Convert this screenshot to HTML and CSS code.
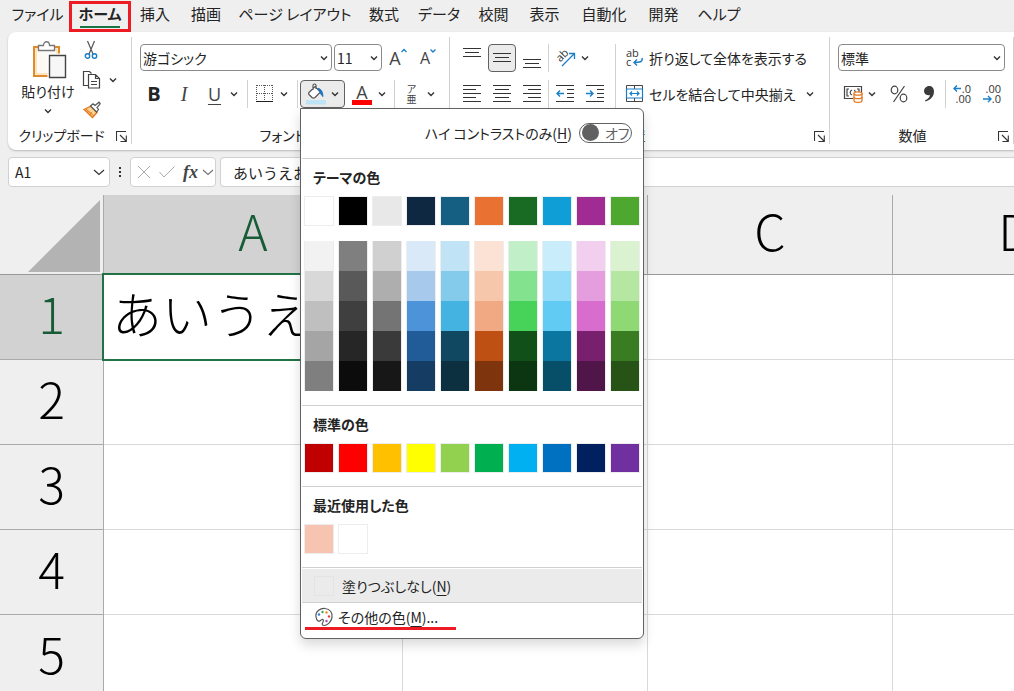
FILE: index.html
```html
<!DOCTYPE html>
<html lang="ja">
<head>
<meta charset="utf-8">
<title>Excel</title>
<link rel="stylesheet" href="styles.css">
<script src="app.js" defer></script>
</head>
<body>
<svg class="defs" aria-hidden="true">
  <symbol id="chev" viewBox="0 0 8 8"><path d="M1 2.5 4 5.5 7 2.5" fill="none" stroke="currentColor" stroke-width="1.4"/></symbol>
  <symbol id="chev-big" viewBox="0 0 12 12"><path d="M1 4l5 4.500L11 4" fill="none" stroke="currentColor" stroke-width="1.200"/></symbol>
  <symbol id="launch" viewBox="0 0 11 11"><path d="M.5 10V.5H10M4 4l6 6M10.3 4.5v6H4.5" fill="none" stroke="#333" stroke-width="1.1"/></symbol>
</svg>

<nav class="tabs">
  <button class="tab">ファイル</button>
  <button class="tab tab-active">ホーム</button>
  <button class="tab">挿入</button>
  <button class="tab">描画</button>
  <button class="tab">ページ レイアウト</button>
  <button class="tab">数式</button>
  <button class="tab">データ</button>
  <button class="tab">校閲</button>
  <button class="tab">表示</button>
  <button class="tab">自動化</button>
  <button class="tab">開発</button>
  <button class="tab">ヘルプ</button>
</nav>

<main>
<section class="ribbon">
  <div class="group group-clip">
    <div class="clip-body">
      <button class="paste">
        <svg width="40" height="40" viewBox="-4 -1 40 40"><path d="M2 6h25v29H2z" fill="#fff" stroke="#e08a2c" stroke-width="2"/><path d="M4 8h21v25H4z" fill="#fdfaf4" stroke="#fbdcae" stroke-width="1.500"/><path d="M6.500 9.500v-5h5c0-5 6-5 6 0h5v5z" fill="#fff" stroke="#777" stroke-width="1.300"/><path d="M15.500 12.500h19v25h-19z" fill="#fff"/><path d="M17.500 14.500h16v22h-16z" fill="#f7f7f7" stroke="#444" stroke-width="1.400"/></svg>
        <span>貼り付け</span>
        <svg class="chev" width="8" height="8"><use href="#chev"/></svg>
      </button>
      <div class="clip-tools">
        <button class="tool" aria-label="切り取り"><svg width="18" height="20" viewBox="-2 0 18 20"><path d="M3.500 1l5.500 13M10.500 1 5 14" fill="none" stroke="#555" stroke-width="1.200"/><circle cx="3.500" cy="16" r="2.200" fill="none" stroke="#1a7fc8" stroke-width="1.400"/><circle cx="10.500" cy="16" r="2.200" fill="none" stroke="#1a7fc8" stroke-width="1.400"/></svg></button>
        <button class="tool" aria-label="コピー"><svg width="20" height="20" viewBox="0 0 20 20"><path d="M6.500 15.500h-5V1.500h6l2 2" fill="none" stroke="#444" stroke-width="1.200"/><path d="M6.500 4.500h7l4 4v9.500h-11zM13.500 4.500v4h4M9 11.500h6M9 14.500h6" fill="#fff" stroke="#444" stroke-width="1.200"/></svg><svg class="chev" width="8" height="8"><use href="#chev"/></svg></button>
        <button class="tool" aria-label="書式のコピー"><svg width="20" height="18" viewBox="0 0 20 18"><path d="M2 8.500 9 5l6 6.500-4.500 5z" fill="#fbd28e" stroke="#e3771f" stroke-width="1.300"/><path d="M5 9.500l2 2M4 8l8 7M8 14l1.500-3" stroke="#e3771f" fill="none"/><path d="M8.500 5 11 2.800l2 1.700L17 1.200l1.200 1.600L15 6.500l1.500 2L14.500 11z" fill="#fff" stroke="#555" stroke-width="1.200"/></svg></button>
      </div>
    </div>
    <footer class="group-foot"><span>クリップボード</span><button class="launch" aria-label="クリップボードの設定"><svg width="11" height="11"><use href="#launch"/></svg></button></footer>
  </div>

  <div class="group group-font">
    <div class="row row-fields">
      <label class="field field-font"><select aria-label="フォント"><option>游ゴシック</option></select><svg class="chev" width="8" height="8"><use href="#chev"/></svg></label>
      <label class="field field-size"><select aria-label="サイズ"><option>11</option></select><svg class="chev" width="8" height="8"><use href="#chev"/></svg></label>
      <button class="icon grow" aria-label="フォント サイズの拡大"><span>A</span><svg width="6" height="16" viewBox="0 0 6 16"><path d="M.5 4 3 1.500 5.500 4" fill="none" stroke="#1a7fc8" stroke-width="1.300"/></svg></button>
      <button class="icon shrink" aria-label="フォント サイズの縮小"><span>A</span><svg width="6" height="16" viewBox="0 0 6 16"><path d="M.5 1.500 3 4 5.500 1.500" fill="none" stroke="#1a7fc8" stroke-width="1.300"/></svg></button>
    </div>
    <div class="row">
      <button class="icon glyph-b">B</button>
      <button class="icon glyph-i">I</button>
      <button class="split glyph-u"><span class="pic">U</span><svg class="chev" width="8" height="8"><use href="#chev"/></svg></button>
      <i class="sep"></i>
      <button class="split" aria-label="罫線"><span class="pic"><svg width="18" height="18" viewBox="0 0 18 18"><path d="M1 .5h16M1 8.500h16" stroke="#555" stroke-dasharray="1 1"/><path d="M.5 0v16M8.500 0v16M16.500 0v16" stroke="#555" stroke-dasharray="1 1"/><path d="M0 16.500h17" stroke="#222"/></svg></span><svg class="chev" width="8" height="8"><use href="#chev"/></svg></button>
      <i class="sep"></i>
      <button class="split split-on" aria-label="塗りつぶしの色"><span class="pic"><svg width="20" height="22" viewBox="0 0 20 22"><path d="M3 9.500 9 3.500l5.500 5.500-5.500 5.500c-1 .8-2 .8-3 0L3 11.500c-.6-.7-.6-1.300 0-2zM7 7V2.500c0-2 3-2 3 0V6" fill="#fff" stroke="#555" stroke-width="1.200"/><path d="M12 5.500c3 .2 4.500 3 5 8-2.500-1.500-2.500-4.500-5-8z" fill="#1a72c0" stroke="#1a72c0"/><path d="M0 17h20v4.500H0z" fill="#bfe4f5"/></svg></span><svg class="chev" width="8" height="8"><use href="#chev"/></svg></button>
      <button class="split" aria-label="フォントの色"><span class="pic font-color">A</span><svg class="chev" width="8" height="8"><use href="#chev"/></svg></button>
      <i class="sep"></i>
      <button class="split"><span class="pic ruby"><span>ア</span><span>亜</span></span><svg class="chev" width="8" height="8"><use href="#chev"/></svg></button>
    </div>
    <footer class="group-foot"><span>フォント</span></footer>
  </div>

  <div class="group group-align">
    <div class="align-body">
      <div class="align-left">
        <div class="row">
          <button class="icon" aria-label="上揃え"><svg width="18" height="20" viewBox="0 0 18 20"><path d="M0 .5h18M2 4.500h14M0 8.500h18" stroke="#333"/></svg></button>
          <button class="icon icon-on" aria-label="上下中央揃え"><svg width="18" height="20" viewBox="0 0 18 20"><path d="M0 5.500h18M2 9.500h14M0 13.500h18" stroke="#333"/></svg></button>
          <button class="icon" aria-label="下揃え"><svg width="18" height="20" viewBox="0 0 18 20"><path d="M0 11.500h18M2 15.500h14M0 19.500h18" stroke="#333"/></svg></button>
          <i class="sep"></i>
          <button class="split" aria-label="方向"><span class="pic"><svg width="20" height="20" viewBox="0 0 20 20"><text x="2" y="13" class="tiny" transform="rotate(-45 5 11)">ab</text><path d="M6 18 18 6M13 5.500h5.500V11" fill="none" stroke="#1a7fc8" stroke-width="1.300"/></svg></span><svg class="chev" width="8" height="8"><use href="#chev"/></svg></button>
        </div>
        <div class="row">
          <button class="icon" aria-label="左揃え"><svg width="18" height="18" viewBox="0 0 18 18"><path d="M0 .5h18M0 4.500h13M0 8.500h18M0 12.500h13M0 16.500h18" stroke="#333"/></svg></button>
          <button class="icon" aria-label="中央揃え"><svg width="18" height="18" viewBox="0 0 18 18"><path d="M0 .5h18M2 4.500h14M0 8.500h18M2 12.500h14M0 16.500h18" stroke="#333"/></svg></button>
          <button class="icon" aria-label="右揃え"><svg width="18" height="18" viewBox="0 0 18 18"><path d="M0 .5h18M5 4.500h13M0 8.500h18M5 12.500h13M0 16.500h18" stroke="#333"/></svg></button>
          <i class="sep"></i>
          <button class="icon" aria-label="インデントを減らす"><svg width="18" height="18" viewBox="0 0 18 18"><path d="M0 .5h18M11 4.500h7M11 8.500h7M11 12.500h7M0 16.500h18" stroke="#333"/><path d="M8 8.500H1M4 5.500l-3 3 3 3" fill="none" stroke="#1a7fc8" stroke-width="1.400"/></svg></button>
          <button class="icon" aria-label="インデントを増やす"><svg width="18" height="18" viewBox="0 0 18 18"><path d="M0 .5h18M11 4.500h7M11 8.500h7M11 12.500h7M0 16.500h18" stroke="#333"/><path d="M0 8.500h7M4 5.500l3 3-3 3" fill="none" stroke="#1a7fc8" stroke-width="1.400"/></svg></button>
        </div>
      </div>
      <i class="sep sep-tall"></i>
      <div class="align-right">
        <button class="wide"><svg width="18" height="20" viewBox="0 0 18 20"><text x="0" y="9" class="tiny">ab</text><text x="0" y="18" class="tiny">c</text><path d="M16 10c1 4-2 4.500-8 4.500M11 11.500l-3 3 3 3" fill="none" stroke="#1a7fc8" stroke-width="1.400"/></svg><span>折り返して全体を表示する</span></button>
        <button class="wide"><svg width="18" height="18" viewBox="0 0 18 18"><path d="M.5 4V.5h16V4M8.500.5V4M.5 13v3.500h16V13M8.500 13v3.500" fill="none" stroke="#444"/><path d="M.500 4h16v9H.5zM4 8.500h9M6 6.500l-2 2 2 2M11 6.500l2 2-2 2" fill="none" stroke="#1a7fc8" stroke-width="1.200"/></svg><span>セルを結合して中央揃え</span><svg class="chev" width="8" height="8"><use href="#chev"/></svg></button>
      </div>
    </div>
    <footer class="group-foot"><span>配置</span><button class="launch" aria-label="配置の設定"><svg width="11" height="11"><use href="#launch"/></svg></button></footer>
  </div>

  <div class="group group-num">
    <div class="row row-fields">
      <label class="field field-num"><select aria-label="表示形式"><option>標準</option></select><svg class="chev" width="8" height="8"><use href="#chev"/></svg></label>
    </div>
    <div class="row">
      <button class="split" aria-label="通貨表示形式"><span class="pic"><svg width="20" height="18" viewBox="0 0 20 18"><path d="M10 13.500H1.500v-12h17V8" fill="none" stroke="#444" stroke-width="1.200"/><path d="M6 4H4v7h2M14 4h2v3M9 5c-2.500 1-2.500 4 0 5M11 5c1.500.5 1.500 2 1.500 3" fill="none" stroke="#444" stroke-width="1.200"/><path d="M11 8.500v7c0 2.500 8 2.500 8 0v-7" fill="#fff" stroke="#e3771f" stroke-width="1.300"/><ellipse cx="15" cy="8.500" rx="4" ry="1.700" fill="#fff" stroke="#e3771f" stroke-width="1.300"/><path d="M11 12c0 2.200 8 2.200 8 0" fill="none" stroke="#e3771f" stroke-width="1.300"/></svg></span><svg class="chev" width="8" height="8"><use href="#chev"/></svg></button>
      <button class="icon" aria-label="パーセント"><svg width="18" height="18" viewBox="0 0 18 18"><path d="M14.500 1 3.500 17" stroke="#444" stroke-width="1.200"/><ellipse cx="4.500" cy="5" rx="3.300" ry="3.800" fill="none" stroke="#444" stroke-width="1.200"/><ellipse cx="13.500" cy="13" rx="3.300" ry="3.800" fill="none" stroke="#444" stroke-width="1.200"/></svg></button>
      <button class="icon" aria-label="桁区切り"><svg width="12" height="18" viewBox="0 0 12 18"><path d="M6 1c3 0 5 2 5 5.500 0 5-3.500 8.500-8.500 10l-.5-1c3-1.500 4.800-3.200 5-5.500-4 1-6-1.500-6-4S3.500 1 6 1z" fill="#3b3b3b"/></svg></button>
      <i class="sep"></i>
      <button class="icon" aria-label="小数点以下の表示桁数を増やす"><svg width="20" height="20" viewBox="0 0 20 20"><path d="M9 4.500H2M5 1.500l-3 3 3 3" fill="none" stroke="#1a7fc8" stroke-width="1.400"/><text x="19" y="9" class="dec">.0</text><text x="19" y="19" class="dec">.00</text></svg></button>
      <button class="icon" aria-label="小数点以下の表示桁数を減らす"><svg width="20" height="20" viewBox="0 0 20 20"><path d="M1 15h8M6 12l3 3-3 3" fill="none" stroke="#1a7fc8" stroke-width="1.400"/><text x="19" y="9" class="dec">.00</text><text x="19" y="19" class="dec">.0</text></svg></button>
    </div>
    <footer class="group-foot"><span>数値</span><button class="launch" aria-label="数値の設定"><svg width="11" height="11"><use href="#launch"/></svg></button></footer>
  </div>
</section>

<section class="formula-bar">
  <label class="name-box"><input value="A1" aria-label="名前ボックス"><svg class="chev" width="12" height="12"><use href="#chev-big"/></svg></label>
  <svg class="dots" width="3" height="11" viewBox="0 0 3 11"><path d="M0 0h2v2H0zM0 4h2v2H0zM0 8h2v2H0z" fill="#333"/></svg>
  <div class="fx-box">
    <svg width="14" height="14" viewBox="0 0 14 14"><path d="M1 1l12 12M13 1 1 13" stroke="#aaa"/></svg>
    <svg width="16" height="12" viewBox="0 0 16 12"><path d="M.5 6 5 11 15.500.5" fill="none" stroke="#aaa"/></svg>
    <span class="fx">fx</span>
    <svg class="chev" width="12" height="12"><use href="#chev-big"/></svg>
  </div>
  <input class="formula" value="あいうえお" aria-label="数式バー">
</section>

<div class="sheet">
  <table>
    <colgroup><col class="col-head"><col class="col-a"><col><col><col></colgroup>
    <thead><tr><th class="corner"><svg width="72" height="72" viewBox="0 0 72 72"><path d="M72 0v72H0z" fill="#b3b3b3"/></svg></th><th class="on">A</th><th>B</th><th>C</th><th>D</th></tr></thead>
    <tbody>
      <tr><th class="on">1</th><td class="selected">あいうえお</td><td></td><td></td><td></td></tr>
      <tr><th>2</th><td></td><td></td><td></td><td></td></tr>
      <tr><th>3</th><td></td><td></td><td></td><td></td></tr>
      <tr><th>4</th><td></td><td></td><td></td><td></td></tr>
      <tr><th>5</th><td></td><td></td><td></td><td></td></tr>
    </tbody>
  </table>
</div>
</main>

<div class="menu">
  <div class="contrast"><label for="hc">ハイ コントラストのみ(<u>H</u>)</label><span class="toggle"><input type="checkbox" id="hc"><span>オフ</span></span></div>
  <section class="block block-theme">
    <h2>テーマの色</h2>
    <div class="swatches" data-set="theme"></div>
    <div class="swatches shades" data-set="shades"></div>
  </section>
  <section class="block">
    <h2>標準の色</h2>
    <div class="swatches" data-set="standard"></div>
  </section>
  <section class="block">
    <h2>最近使用した色</h2>
    <div class="swatches" data-set="recent"></div>
  </section>
  <button class="item item-none"><span class="none-box"></span><span>塗りつぶしなし(<u>N</u>)</span></button>
  <button class="item item-more"><svg width="20" height="20" viewBox="0 0 20 20"><path d="M2 10C1 4 7 1 11 1.500c5 .5 8 4.500 7 9-1 5-5 8-8 8-2.500 0-2-2-1-3.500.8-1.500.3-3-1-2.500-1.500.5-2.500 2.500-4 1.500-1.200-.8-1.800-2.500-2-4z" fill="#fff" stroke="#555" stroke-width="1.200"/><circle cx="5" cy="7.500" r="1.200" fill="#2a7fd4"/><circle cx="8.500" cy="5" r="1.200" fill="#39a852"/><circle cx="12.500" cy="5.500" r="1.200" fill="#f08a24"/><circle cx="15" cy="9.500" r="1.200" fill="#e5443b"/><circle cx="12.500" cy="14" r="1.200" fill="#9b4fc0"/></svg><span>その他の色(<u>M</u>)...</span></button>
</div>
</body>
</html>
```
FILE: styles.css
```css
* { box-sizing: border-box; }
body {
  margin: 0;
  position: relative;
  min-height: 100vh;
  overflow: hidden;
  background: #efefef;
  color: #242424;
  font: 14px/20px "Noto Sans CJK JP", sans-serif;
  font-feature-settings: "palt";
}
.defs { position: absolute; width: 0; height: 0; }
button, input, select { font: inherit; font-feature-settings: inherit; color: inherit; border: 0; background: none; padding: 0; margin: 0; }
button { display: flex; align-items: center; justify-content: center; white-space: nowrap; }
svg { display: block; flex: none; overflow: visible; }

.tabs {
  display: grid;
  grid-template-columns: 65px 60px 50px 52px 126px 52px 58px 51px 51px 68px 51px 60px;
  padding-left: 5px;
  height: 32px;
}
.tab { position: relative; height: 28px; font-size: 15px; }
.tab-active { font-weight: 700; }
.tab-active::before { content: ""; position: absolute; inset: 1px -1px -4px; border: 3px solid #ed1c24; z-index: 2; }
.tab-active::after { content: ""; position: absolute; left: 10px; right: 10px; bottom: 0; height: 2px; background: #1a7344; }

.ribbon {
  display: flex;
  height: 118px;
  margin-left: 8px;
  padding: 5px 0 6px;
  background: #fff;
  border-radius: 8px 0 0 8px;
  box-shadow: 0 1px 2px #b8b8b8;
}
.group { display: flex; flex-direction: column; border-right: 1px solid #d1d1d1; padding-top: 7px; flex: none; }
.group-clip { width: 124px; }
.group-font { width: 318px; padding-left: 8px; }
.group-align { width: 380px; padding-left: 8px; }
.group-num { flex: 1; padding-left: 8px; }
.group-foot { position: relative; display: flex; justify-content: center; margin-top: auto; height: 18px; line-height: 18px; margin-right: 16px; }
.launch { position: absolute; right: -12px; top: 5px; }
.group-font .group-foot { margin-right: 24px; }
.group-align .group-foot { margin-right: 24px; }
.group-num .group-foot { margin-right: 26px; }
.group-align .launch { right: -20px; }
.group-num .launch { right: -22px; }

.clip-body { display: flex; gap: 8px; padding-left: 14px; margin-top: -4px; }
.paste { flex-direction: column; width: 52px; gap: 1px; justify-content: flex-start; }
.paste .chev { margin-top: 5px; }
.clip-tools { display: flex; flex-direction: column; gap: 10px; }
.tool { height: 20px; justify-content: flex-start; gap: 7px; }
.chev { color: #333; }

.row { display: flex; gap: 2px; height: 28px; align-items: center; }
.row + .row { margin-top: 8px; }
.row-fields { align-items: flex-start; }
.field { position: relative; display: block; height: 27px; }
.field select { appearance: none; width: 100%; height: 100%; border: 1px solid #8a8a8a; border-radius: 4px; padding: 0 2px; background: #fff; }
.field .chev { position: absolute; right: 4px; top: 10px; pointer-events: none; }
.field-font { width: 192px; }
.field-size { width: 48px; }
.field-num { flex: 1; margin-right: 8px; }
.icon { width: 28px; height: 28px; }
.split { width: 45px; height: 28px; justify-content: flex-start; border-radius: 4px; }
.pic { width: 29px; display: flex; justify-content: center; }
.split .chev { margin-left: 1px; }
.icon-on, .split-on { background: #ebebeb; border: 1px solid #616161; border-radius: 4px; }
.sep { width: 1px; height: 28px; background: #d1d1d1; }
.sep-tall { height: 64px; margin: 0 10px 0 4px; }
.grow span, .shrink span { font: 18px/20px "Open Sans", sans-serif; color: #444; }
.shrink span { font-size: 16px; }
.grow, .shrink { align-items: flex-start; padding-top: 4px; }
.glyph-b { font: 700 20px/20px "Open Sans", sans-serif; }
.glyph-i { font: italic 20px/20px "Liberation Serif", serif; color: #444; }
.glyph-u { font: 18px/20px "Open Sans", sans-serif; color: #444; }
.glyph-u .pic { text-decoration: underline; text-underline-offset: 3px; }
.pic.font-color { width: 20px; margin: 0 5px; height: 22px; border-bottom: 5px solid #f00; font: 18px/18px "Open Sans", sans-serif; color: #444; }
.ruby { flex-direction: column; align-items: center; font-size: 10px; line-height: 10px; color: #444; }
.tiny { font: 11px "Open Sans", sans-serif; fill: #333; }
.dec { font: 11px "Open Sans", sans-serif; fill: #333; text-anchor: end; }
.align-body { display: flex; }
.align-left { width: 153px; }
.align-right { display: flex; flex-direction: column; gap: 8px; }
.wide { height: 28px; justify-content: flex-start; gap: 5px; }
.wide .chev { margin-left: 6px; }

.formula-bar { display: flex; align-items: center; height: 30px; margin: 7px 0 8px 8px; }
.name-box, .fx-box, .formula { height: 30px; background: #fff; border: 1px solid #d1d1d1; border-radius: 4px; }
.name-box { display: flex; align-items: center; width: 102px; padding: 0 4px 0 6px; }
.name-box input { flex: 1; min-width: 0; }
.dots { margin: 0 8px 0 9px; }
.fx-box { display: flex; align-items: center; gap: 8px; width: 86px; padding: 0 1px 0 6px; }
.fx { font: italic 700 18px/18px "Liberation Serif", serif; color: #444; }
.fx-box .chev { margin-left: -4px; color: #777; }
.formula { flex: 1; min-width: 0; margin-left: 4px; padding: 0 12px; border-right: 0; border-radius: 4px 0 0 4px; font-size: 15px; font-feature-settings: normal; }

.sheet { overflow: hidden; }
table { table-layout: fixed; width: 1138px; border-collapse: separate; border-spacing: 0; font-feature-settings: normal; }
.col-head { width: 104px; }
.col-a { width: 299px; }
th, td { height: 85px; padding: 0 0 11px; border-right: 1px solid #d9d9d9; border-bottom: 1px solid #d9d9d9; background: #fff; white-space: nowrap; }
th { background: #efefef; color: #000; font-size: 50px; line-height: 64px; font-weight: 300; border-color: #aaa; }
thead th { height: 80px; border-bottom-color: #999; }
thead .corner { padding: 0; }
.corner svg { margin: 4px 3px 2px auto; }
.on { background: #d2d2d2; color: #185c37; }
.selected { position: relative; padding-left: 8px; font-size: 50px; line-height: 64px; font-weight: 300; color: #000; }
.selected::after { content: ""; position: absolute; inset: -2px -1px -2px -2px; border: 2px solid #217346; }

.menu {
  position: absolute;
  left: 300px;
  top: 108px;
  width: 344px;
  padding: 0 1px;
  background: #fff;
  border: 1px solid #616161;
  border-radius: 0 6px 6px 6px;
  box-shadow: 0 6px 12px rgba(0, 0, 0, .15);
  z-index: 3;
}
.contrast { display: flex; align-items: center; justify-content: flex-end; gap: 7px; height: 50px; padding: 0 10px 2px; border-bottom: 1px solid #d1d1d1; }
u { text-underline-offset: 3px; }
.toggle { display: flex; align-items: center; gap: 6px; width: 53px; height: 20px; padding: 0 3px 0 2px; border: 1px solid #616161; border-radius: 10px; color: #616161; white-space: nowrap; }
.toggle input { appearance: none; width: 17px; height: 17px; border-radius: 50%; background: #616161; flex: none; }
.block { padding: 8px 2px 13px; border-bottom: 1px solid #d1d1d1; }
.block-theme { padding-bottom: 14px; }
h2 { margin: 0 0 9px; padding-left: 9px; font-size: 14px; line-height: 20px; font-weight: 700; }
.swatches { display: grid; grid-template-columns: repeat(10, 30px); column-gap: 4px; }
.swatch { height: 30px; border: 1px solid #ededed; }
.shades { margin-top: 15px; }
.shades .swatch { border-width: 0 1px; }
.item { width: 100%; height: 35px; justify-content: flex-start; }
.item-none { background: #ebebeb; border-top: 1px solid #fff; border-bottom: 1px solid #d1d1d1; padding-left: 12px; gap: 8px; }
.none-box { width: 20px; height: 20px; border: 1px solid #e3e3e3; }
.item-more { position: relative; padding: 0 0 7px 12px; gap: 4px; }
.item-more::after { content: ""; position: absolute; left: 3px; top: 24px; width: 151px; height: 3px; background: #ed1c24; }
```
FILE: app.js
```js
const colors = {
  theme: ['#ffffff', '#000000', '#e8e8e8', '#0e2841', '#156082', '#e97132', '#196b24', '#0f9ed5', '#a02b93', '#4ea72e'],
  shades: [
    '#f2f2f2', '#7f7f7f', '#d0d0d0', '#dae9f8', '#c0e4f5', '#fbe2d5', '#c1f0c8', '#caedfb', '#f2ceef', '#daf2d0',
    '#d8d8d8', '#595959', '#aeaeae', '#a6c9ec', '#83caeb', '#f7c7ac', '#83e28e', '#94dcf8', '#e49edd', '#b5e6a2',
    '#bfbfbf', '#3f3f3f', '#747474', '#4d93d9', '#44b3e1', '#f1a983', '#47d359', '#61cbf3', '#d86dcd', '#8ed973',
    '#a5a5a5', '#262626', '#3a3a3a', '#215c98', '#104861', '#be5014', '#12501a', '#0b769f', '#78206e', '#3a7c22',
    '#7f7f7f', '#0c0c0c', '#171717', '#153d64', '#0c3040', '#7e350e', '#0c3512', '#074f69', '#501549', '#275317'
  ],
  standard: ['#c00000', '#ff0000', '#ffc000', '#ffff00', '#92d050', '#00b050', '#00b0f0', '#0070c0', '#002060', '#7030a0'],
  recent: ['#f7c4b1', '#ffffff']
};

document.querySelectorAll('[data-set]').forEach((box) => {
  colors[box.dataset.set].forEach((color) => {
    const button = document.createElement('button');
    button.className = 'swatch';
    button.style.background = color;
    button.setAttribute('aria-label', color);
    box.append(button);
  });
});
```
